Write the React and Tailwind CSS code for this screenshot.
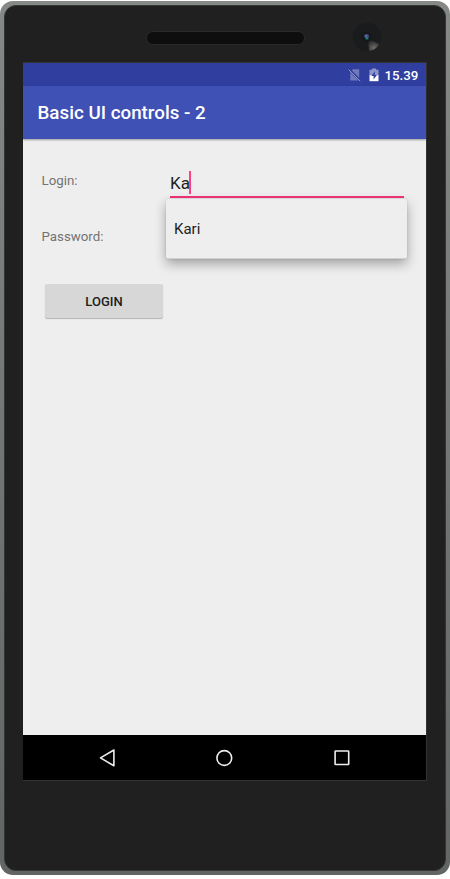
const FONT = "font-['Roboto','Noto_Sans',sans-serif]";

function NoSimIcon() {
  return (
    <svg className="h-[14px] w-[14px]" viewBox="0 0 14 14">
      <path d="M5 1.2h6.2v11.2H2.2V4z" fill="#7079ba" />
      <path d="M.8 1.2 12.8 13.2" stroke="#303f9f" strokeWidth="2.4" />
      <path d="M.6 1.6 12.2 13.2" stroke="#8e96c9" strokeWidth="1" />
    </svg>
  );
}

function BatteryIcon() {
  return (
    <svg className="h-[14px] w-[10px]" viewBox="0 0 10 14">
      <path d="M.5 1.7H3V.5h4v1.2h2.5V7.5h-9z" fill="#8e96c9" />
      <path d="M.5 7.2h9v6h-9z" fill="#fff" />
      <path d="M6 3.2 2.3 8h2.3v3.6L7.9 6.9H5.7z" fill="#303f9f" />
    </svg>
  );
}

function StatusBar() {
  return (
    <div className="flex h-[23px] items-center bg-[#303f9f] pl-[325px] text-white">
      <NoSimIcon />
      <span className="ml-[6.5px] flex"><BatteryIcon /></span>
      <span className="ml-[6px] mt-[2px] text-[13.3px] leading-4 font-medium">15.39</span>
    </div>
  );
}

function LoginField() {
  return (
    <div className="relative mt-[31px] ml-[49px] h-[28px] w-[234px] border-b-2 border-[#f4347a]">
      <div className="flex h-[24px] items-center">
        <span className="pt-[2px] text-[17px] leading-6 text-[#212121]">Ka</span>
        <span className="-ml-[0.5px] h-[23px] w-[1.5px] bg-[#ff4081]" />
      </div>
      <div className="absolute top-[29px] -left-[4px] flex h-[60px] w-[241px] items-center rounded-[2px] border-b border-[#d0d0d0] bg-[#eee] pt-[2px] pl-2 text-[15px] text-[#212121] shadow-[0_5px_12px_rgba(0,0,0,0.32),0_0_2px_rgba(0,0,0,0.15)]">
        Kari
      </div>
    </div>
  );
}

function NavigationBar() {
  return (
    <nav className="flex h-[45px] items-center bg-black pl-[75px]">
      <svg className="h-[20px] w-[20px]" viewBox="0 0 20 20" fill="none" stroke="#eee" strokeWidth="1.6" strokeLinejoin="round">
        <path d="M15.9 2v15.8L2.5 9.9z" />
      </svg>
      <svg className="ml-[96px] h-[20px] w-[20px]" viewBox="0 0 20 20" fill="none" stroke="#eee" strokeWidth="1.6">
        <circle cx="10.3" cy="10" r="7.4" />
      </svg>
      <svg className="ml-[98px] h-[20px] w-[20px]" viewBox="0 0 20 20" fill="none" stroke="#eee" strokeWidth="1.6">
        <rect x="3.1" y="3" width="13.6" height="13.5" rx=".6" />
      </svg>
    </nav>
  );
}

function Camera() {
  return (
    <svg className="h-[30px] w-[30px]" viewBox="0 0 30 30">
      <defs>
        <radialGradient id="glint" gradientUnits="userSpaceOnUse" cx="22" cy="26" r="9">
          <stop offset="0" stopColor="#706d69" />
          <stop offset="1" stopColor="#1b1c1e" />
        </radialGradient>
      </defs>
      <circle cx="15" cy="15" r="14.3" fill="#1a1b1d" />
      <path d="M16 17 27.5 22A14.3 14.3 0 0 1 17 29z" fill="url(#glint)" />
      <circle cx="14.5" cy="15" r="5" fill="#15171b" />
      <ellipse cx="14.5" cy="14" rx="2.6" ry="2" fill="#464876" />
      <path d="M13 15h3.4v2.4h-2.6z" fill="#1d777c" />
      <path d="M13.6 13.4h1.4v1h-1.4z" fill="#7ba0cc" />
    </svg>
  );
}

export default function App() {
  return (
    <div className={`h-[879px] w-[450px] overflow-hidden bg-white pt-px ${FONT}`}>
      <div className="h-[874px] rounded-[13px] bg-linear-to-b from-[#858a86] via-[#727776] to-[#616564] p-[4px]">
        <div className="h-[866px] rounded-[12px] border border-[#343635] bg-[#202020] pl-[18px]">
          <div className="flex h-[56px] items-center pl-[122.5px]">
            <div className="mt-[7px] h-[14px] w-[159px] rounded-full border border-[#292929] bg-[#0e0e0e]" />
            <div className="mt-[5px] ml-[47px]"><Camera /></div>
          </div>
          <div className="w-[404px] border-t border-r border-b border-[#333]">
            <StatusBar />
            <header className="relative flex h-[53px] items-center bg-[#3f51b5] pt-px pl-[14.5px] text-[18.8px] font-medium text-white shadow-[0_1px_2px_rgba(0,0,0,0.35)]">
              Basic UI controls - 2
            </header>
            <main className="h-[596px] bg-[#eee]">
              <div className="flex">
                <div className="w-[98px] pl-[18.5px] text-[13.3px] leading-4 text-[#737373]">
                  <div className="mt-[34px]">Login:</div>
                  <div className="mt-[40px]">Password:</div>
                </div>
                <LoginField />
              </div>
              <button className="mt-[39px] ml-[22px] flex h-[34px] w-[118px] items-center justify-center rounded-[2px] bg-[#d7d7d7] pt-[2px] text-[13px] font-medium text-[#202020] shadow-[0_1px_1px_rgba(0,0,0,0.25)]">
                LOGIN
              </button>
            </main>
            <NavigationBar />
          </div>
        </div>
      </div>
    </div>
  );
}
